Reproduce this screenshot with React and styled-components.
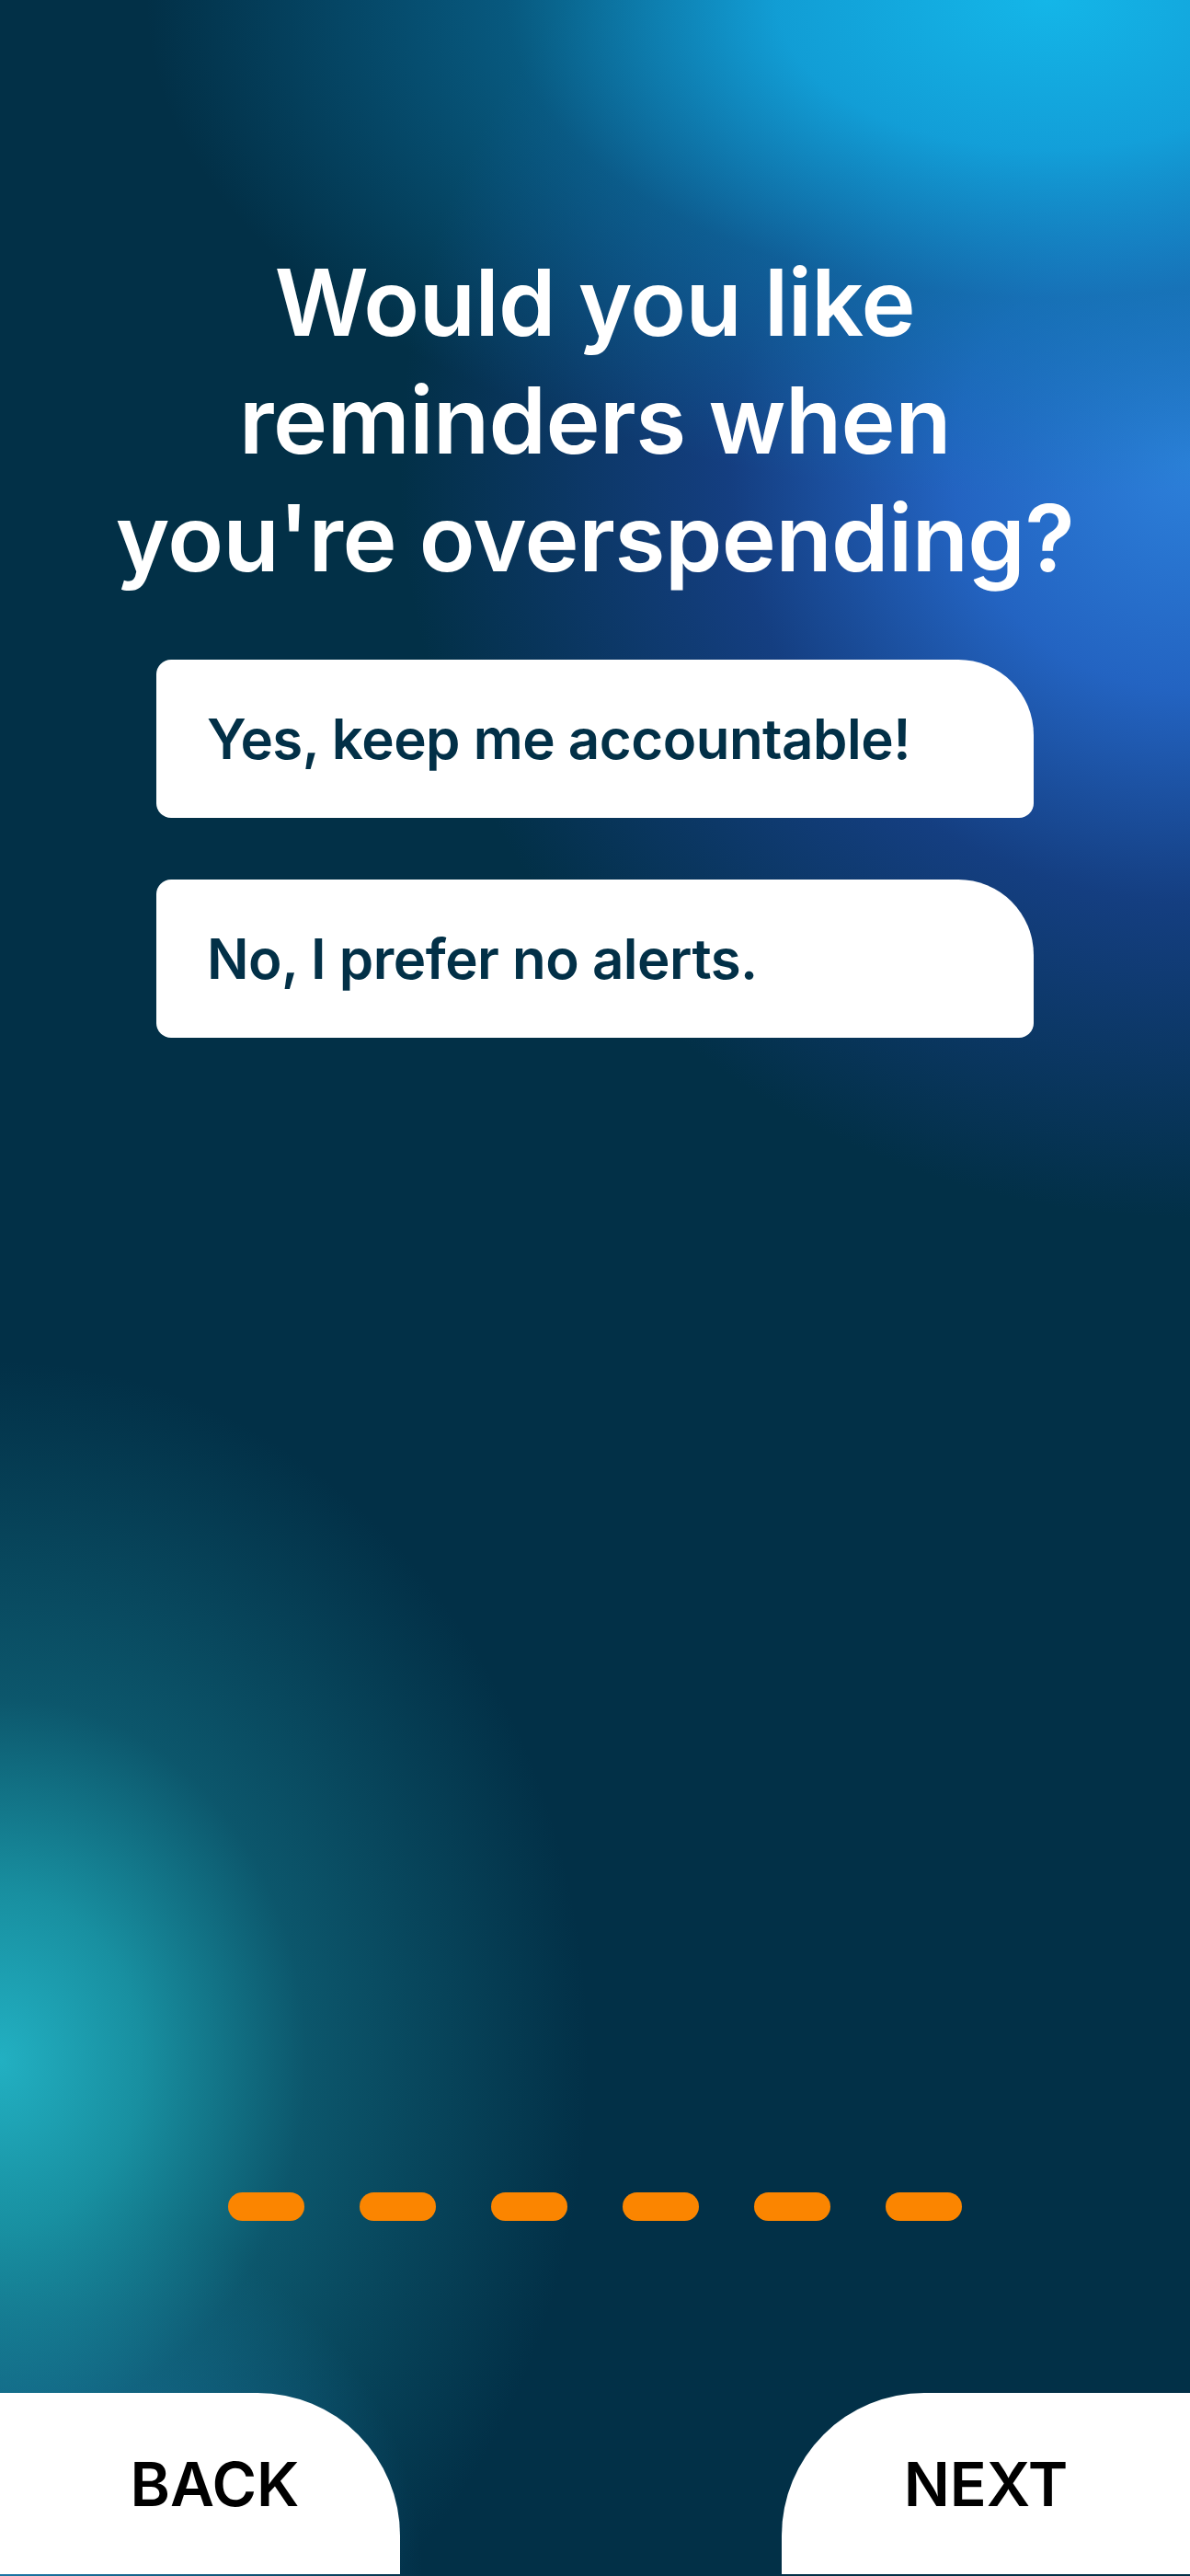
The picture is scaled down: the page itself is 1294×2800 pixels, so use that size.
import React from "react";
import styled, {createGlobalStyle} from "styled-components";


const GlobalStyle = createGlobalStyle`
  html, body {
    margin: 0;
    padding: 0;
    background: #023047;
  }
`;


const Screen = styled.div`
  min-height: 2800px;
  display: flex;
  flex-direction: column;
  align-items: center;
  font-family: "Inter", "Noto Sans", sans-serif;
  background:
    radial-gradient(ellipse 640px 760px at 0% 80%, rgba(34, 176, 194, 1) 0%, rgba(28, 160, 176, 0.85) 24%, rgba(20, 118, 138, 0.55) 52%, rgba(2, 48, 71, 0) 100%),
    radial-gradient(ellipse 460px 420px at 0% 100%, rgba(40, 140, 210, 0.75) 0%, rgba(2, 48, 71, 0) 100%),
    radial-gradient(ellipse 980px 540px at 88% 0%, rgba(20, 182, 232, 1) 0%, rgba(18, 166, 222, 0.92) 30%, rgba(12, 122, 172, 0.55) 60%, rgba(2, 48, 71, 0) 100%),
    radial-gradient(ellipse 860px 820px at 100% 18%, rgba(44, 128, 218, 1) 0%, rgba(38, 104, 204, 0.92) 30%, rgba(30, 70, 160, 0.65) 58%, rgba(2, 48, 71, 0) 100%),
    #023047;
`;


const Title = styled.h1`
  margin: 265px 0 0;
  color: #ffffff;
  font-size: 100px;
  font-weight: 600;
  line-height: 128px;
  letter-spacing: -0.5px;
  text-align: center;
`;


const Options = styled.div`
  display: flex;
  flex-direction: column;
  gap: 67px;
  width: 954px;
  margin-top: 68px;
`;


const OptionCard = styled.button`
  height: 172px;
  display: flex;
  align-items: center;
  padding: 0 0 0 55px;
  border: none;
  border-radius: 16px 82px 16px 16px;
  background: #ffffff;
  color: #023047;
  font-family: inherit;
  font-size: 60px;
  font-weight: 600;
  letter-spacing: -0.5px;
  text-align: left;
  cursor: pointer;
`;


const Spacer = styled.div`
  flex: 1;
`;


const Dots = styled.div`
  display: flex;
  gap: 60px;
  margin-bottom: 187px;
`;


const Dot = styled.span`
  width: 83px;
  height: 31px;
  border-radius: 16px;
  background: #fb8500;
`;


const Footer = styled.div`
  width: 100%;
  display: flex;
  justify-content: space-between;
  margin-bottom: 2px;
`;


const NavButton = styled.button`
  width: ${props => props.$side === "left" ? "435px" : "444px"};
  height: 197px;
  padding: ${props => props.$side === "left" ? "0 0 0 32px" : "0"};
  border: none;
  border-radius: ${props => props.$side === "left" ? "0 155px 0 0" : "155px 0 0 0"};
  background: #ffffff;
  color: #000000;
  font-family: inherit;
  font-size: 66px;
  font-weight: 600;
  cursor: pointer;
`;


const App = () => {
    return (
        <Screen>
            <GlobalStyle/>

            <Title>
                Would you like<br/>
                reminders when<br/>
                you're overspending?
            </Title>

            <Options>
                <OptionCard>Yes, keep me accountable!</OptionCard>
                <OptionCard>No, I prefer no alerts.</OptionCard>
            </Options>

            <Spacer/>

            <Dots>
                {[0, 1, 2, 3, 4, 5].map(i => <Dot key={i}/>)}
            </Dots>

            <Footer>
                <NavButton $side="left">BACK</NavButton>
                <NavButton $side="right">NEXT</NavButton>
            </Footer>
        </Screen>
    );
};


export default App;
